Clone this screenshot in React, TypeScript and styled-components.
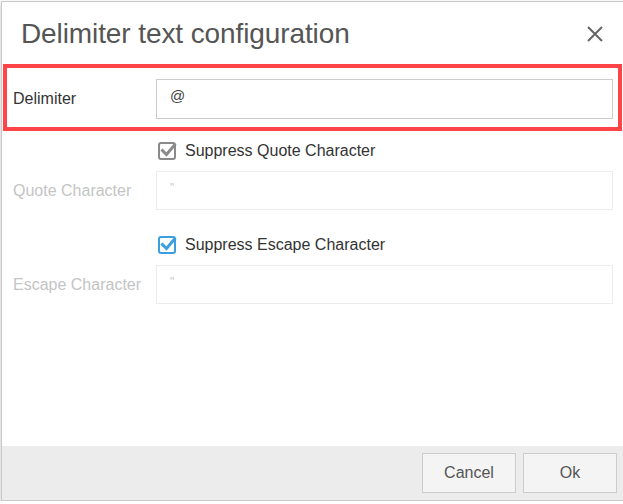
import React from "react";
import styled, { createGlobalStyle } from "styled-components";

const Global = createGlobalStyle`
  html, body { margin: 0; padding: 0; background: #fff; overflow: hidden; }
  body { font-family: "Liberation Sans", Arial, sans-serif; }
  * { box-sizing: border-box; }
`;

const Dialog = styled.div`
  margin: 1px 0 0 1px;
  width: 640px;
  height: 500px;
  border: 1px solid #c9c9c9;
  background: #fff;
  display: flex;
  flex-direction: column;
  box-shadow: 0 2px 4px rgba(0, 0, 0, 0.25);
`;

const Header = styled.div`
  height: 62px;
  display: flex;
  align-items: center;
  padding: 1px 0 0 19px;
  width: 621px;
  justify-content: space-between;
`;

const Title = styled.h1`
  margin: 0;
  font-weight: normal;
  font-size: 28px;
  color: #555;
  letter-spacing: -0.1px;
`;

const Close = styled.button`
  border: 0;
  background: none;
  padding: 0;
  width: 20px;
  height: 20px;
  margin-right: 18px;
  display: flex;
  align-items: center;
  justify-content: center;
  cursor: pointer;
`;

const Form = styled.div`
  padding: 0 10px 0 11px;
  width: 621px;
  display: flex;
  flex-direction: column;
`;

const Highlight = styled.div`
  margin: 0 -9px 0 -10px;
  border: 4px solid #ff4447;
  padding: 11px 5px 8px 6px;
`;

const Row = styled.div`
  display: grid;
  grid-template-columns: 143px 1fr;
  align-items: center;
`;

const Label = styled.label<{ $disabled?: boolean }>`
  font-size: 16px;
  color: ${(p) => (p.$disabled ? "#c4c4c4" : "#333")};
  white-space: nowrap;
`;

const Input = styled.div<{ $disabled?: boolean }>`
  height: ${(p) => (p.$disabled ? "39px" : "40px")};
  border: 1px solid ${(p) => (p.$disabled ? "#ececec" : "#cccccc")};
  padding: 7px 13px;
  font-size: ${(p) => (p.$disabled ? "12px" : "15px")};
  color: ${(p) => (p.$disabled ? "#c8c8c8" : "#444")};
  line-height: 18px;
`;

const Group = styled.div<{ $top: number }>`
  margin-top: ${(p) => p.$top}px;
  display: flex;
  flex-direction: column;
  gap: 8px;
`;

const CheckRow = styled.div`
  margin-left: 145px;
  height: 24px;
  display: flex;
  align-items: center;
  gap: 9px;
  font-size: 16px;
  color: #333;
`;

const Box = styled.span<{ $color: string }>`
  width: 18px;
  height: 18px;
  border: 2px solid ${(p) => p.$color};
  border-radius: 3px;
  position: relative;
  display: inline-block;
  background: #fff;
  & svg {
    position: absolute;
    left: -1px;
    top: -3px;
  }
`;

const Footer = styled.div`
  margin-top: auto;
  height: 54px;
  background: #ececec;
  display: flex;
  align-items: center;
  justify-content: flex-end;
  gap: 7px;
  padding-right: 23px;
`;

const Button = styled.button`
  width: 94px;
  height: 40px;
  border: 1px solid #cccccc;
  background: #f4f4f4;
  color: #555;
  font-family: "Liberation Sans", Arial, sans-serif;
  font-size: 16px;
  cursor: pointer;
`;

const Check = ({ color }: { color: string }) => (
  <Box $color={color}>
    <svg width="18" height="18" viewBox="0 0 18 18">
      <path d="M3.5 9.5 L7.5 13.5 L15.5 4" fill="none" stroke={color} strokeWidth="3" strokeLinecap="square" />
    </svg>
  </Box>
);

export default function App() {
  return (
    <>
      <Global />
      <Dialog>
        <Header>
          <Title>Delimiter text configuration</Title>
          <Close aria-label="close">
            <svg width="18" height="18" viewBox="0 0 18 18">
              <path d="M2 2 L16 16 M16 2 L2 16" stroke="#666" strokeWidth="2" />
            </svg>
          </Close>
        </Header>
        <Form>
          <Highlight>
            <Row>
              <Label>Delimiter</Label>
              <Input>@</Input>
            </Row>
          </Highlight>
          <Group $top={8}>
            <CheckRow>
              <Check color="#8a8a8a" />
              Suppress Quote Character
            </CheckRow>
            <Row>
              <Label $disabled>Quote Character</Label>
              <Input $disabled>"</Input>
            </Row>
          </Group>
          <Group $top={23}>
            <CheckRow>
              <Check color="#3b9ee0" />
              Suppress Escape Character
            </CheckRow>
            <Row>
              <Label $disabled>Escape Character</Label>
              <Input $disabled>"</Input>
            </Row>
          </Group>
        </Form>
        <Footer>
          <Button>Cancel</Button>
          <Button>Ok</Button>
        </Footer>
      </Dialog>
    </>
  );
}
